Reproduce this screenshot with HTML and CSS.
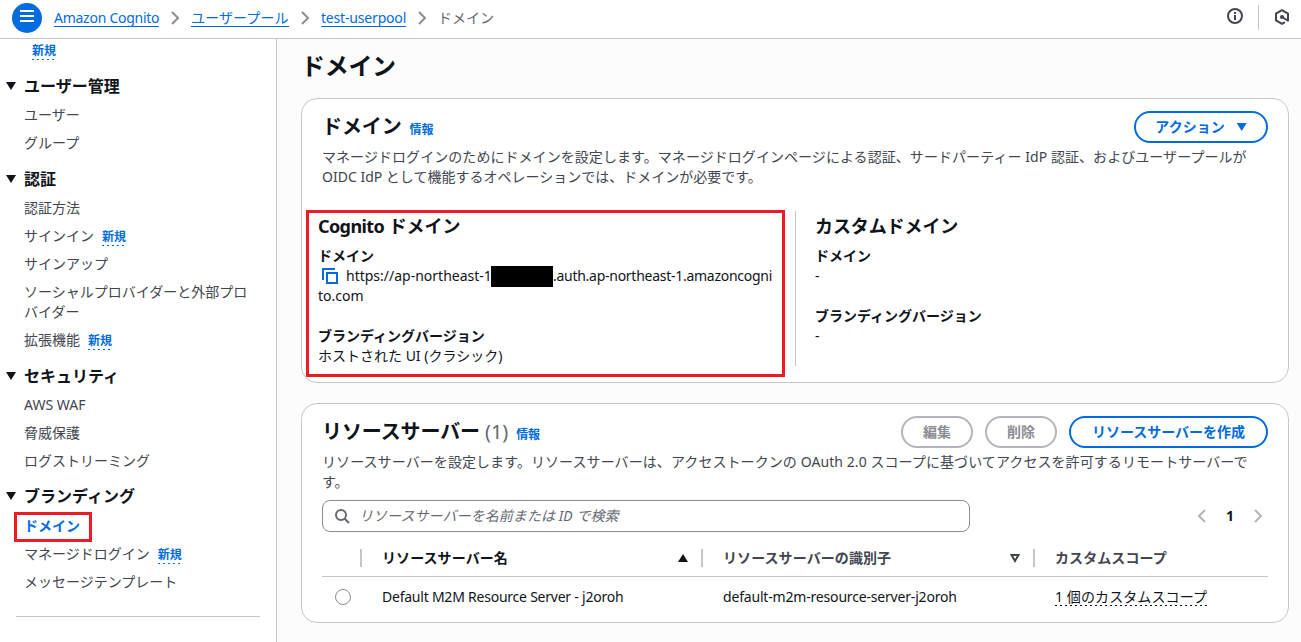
FILE: index.html
```html
<!DOCTYPE html>
<html lang="ja">
<head>
<meta charset="utf-8">
<title>ドメイン - Amazon Cognito</title>
<link rel="stylesheet" href="styles.css">
</head>
<body>
<header class="topbar">
  <button class="menu-btn" aria-label="menu"><svg width="30" height="30" viewBox="0 0 30 30"><path d="M8 8h14M8 13h14M8 18h14" stroke="#fff" stroke-width="2"/></svg></button>
  <nav class="crumbs">
    <a class="crumb c-service">Amazon Cognito</a>
    <svg class="chev" width="16" height="16" viewBox="0 0 16 16"><path d="M5 2l6 6-6 6"/></svg>
    <a class="crumb c-pools">ユーザープール</a>
    <svg class="chev" width="16" height="16" viewBox="0 0 16 16"><path d="M5 2l6 6-6 6"/></svg>
    <a class="crumb c-pool">test-userpool</a>
    <svg class="chev" width="16" height="16" viewBox="0 0 16 16"><path d="M5 2l6 6-6 6"/></svg>
    <span class="crumb-current">ドメイン</span>
  </nav>
  <div class="tools">
    <svg width="16" height="16" viewBox="0 0 16 16" fill="none" stroke="#424650" stroke-width="2"><circle cx="8" cy="8" r="7"/><path d="M8 4v2M8 7v5"/></svg>
    <span class="tools-sep"></span>
    <svg class="hex" width="16" height="16" viewBox="0 0 16 16" fill="none" stroke="#424650" stroke-width="2"><path d="M14 12.200V4.600L8 1.200 2 4.600v6.800L8 14.800l2.800-1.600M8 8l6.500 4"/><circle cx="8" cy="8" r="2.100" fill="#424650" stroke="none"/></svg>
  </div>
</header>
<div class="layout">
  <aside class="side">
    <div class="item first"><span class="new">新規</span></div>
    <h3 class="group"><i class="tri"></i>ユーザー管理</h3>
    <div class="item">ユーザー</div>
    <div class="item">グループ</div>
    <h3 class="group"><i class="tri"></i>認証</h3>
    <div class="item">認証方法</div>
    <div class="item">サインイン<span class="new">新規</span></div>
    <div class="item">サインアップ</div>
    <div class="item">ソーシャルプロバイダーと外部プロ<br>バイダー</div>
    <div class="item">拡張機能<span class="new">新規</span></div>
    <h3 class="group"><i class="tri"></i>セキュリティ</h3>
    <div class="item latin">AWS WAF</div>
    <div class="item">脅威保護</div>
    <div class="item">ログストリーミング</div>
    <h3 class="group brand"><i class="tri"></i>ブランディング</h3>
    <div class="item active">ドメイン<span class="mark mark-nav"></span></div>
    <div class="item">マネージドログイン<span class="new">新規</span></div>
    <div class="item">メッセージテンプレート</div>
    <hr class="side-line">
  </aside>
  <main class="main">
    <h1 class="page-title">ドメイン</h1>
    <section class="card card-domain">
      <div class="card-head">
        <h2 class="card-title">ドメイン<a class="info">情報</a></h2>
        <button class="btn btn-action">アクション<i class="tri blue"></i></button>
      </div>
      <p class="desc"><span class="wide-a">マネージドログインのためにドメインを設定します。マネージドログインページによる認証、サードパーティー IdP 認証、およびユーザープールが</span><br>OIDC IdP として機能するオペレーションでは、ドメインが必要です。</p>
      <div class="cols">
        <div class="col col-cognito">
          <h3 class="col-title"><span class="col-latin">Cognito</span> ドメイン</h3>
          <div class="label">ドメイン</div>
          <div class="value url"><svg class="copy" width="16" height="16" viewBox="0 0 16 16" fill="none" stroke="#006ce0" stroke-width="2"><path d="M1 12V1h12M5 5h10v10H5z"/></svg><span class="url-a">https://ap-northeast-1</span><span class="redact"></span><span class="url-b">.auth.ap-northeast-1.amazoncogni</span></div>
          <div class="value url-c">to.com</div>
          <div class="label second">ブランディングバージョン</div>
          <div class="value">ホストされた UI (クラシック)</div>
          <span class="mark mark-panel"></span>
        </div>
        <div class="col col-custom">
          <h3 class="col-title">カスタムドメイン</h3>
          <div class="label">ドメイン</div>
          <div class="value">-</div>
          <div class="label second">ブランディングバージョン</div>
          <div class="value">-</div>
        </div>
      </div>
    </section>
    <section class="card card-servers">
      <div class="card-head">
        <h2 class="card-title">リソースサーバー<span class="count">(1)</span><a class="info">情報</a></h2>
        <div class="btns">
          <button class="btn off">編集</button>
          <button class="btn off">削除</button>
          <button class="btn btn-create">リソースサーバーを作成</button>
        </div>
      </div>
      <p class="desc"><span class="wide-b">リソースサーバーを設定します。リソースサーバーは、アクセストークンの OAuth 2.0 スコープに基づいてアクセスを許可するリモートサーバーで</span><br>す。</p>
      <div class="filter">
        <div class="search"><svg width="16" height="16" viewBox="0 0 16 16" fill="none" stroke="#656871" stroke-width="2"><circle cx="7" cy="7" r="5"/><path d="M10.500 10.500L15 15"/></svg><span class="placeholder">リソースサーバーを名前または ID で検索</span></div>
        <div class="pages">
          <svg width="16" height="16" viewBox="0 0 16 16"><path d="M11 2L5 8l6 6"/></svg>
          <b>1</b>
          <svg width="16" height="16" viewBox="0 0 16 16"><path d="M5 2l6 6-6 6"/></svg>
        </div>
      </div>
      <div class="table">
        <div class="row thead">
          <div></div>
          <div class="th sorted">リソースサーバー名<svg width="16" height="16" viewBox="0 0 16 16"><path d="M8 4l5 8H3z" fill="#0f141a"/></svg></div>
          <div class="th">リソースサーバーの識別子<svg width="16" height="16" viewBox="0 0 16 16"><path d="M4.500 5h7L8 11z" fill="none" stroke="#424650" stroke-width="2"/></svg></div>
          <div class="th">カスタムスコープ</div>
        </div>
        <div class="row">
          <div class="pick"><span class="radio"></span></div>
          <div class="td"><span class="name">Default M2M Resource Server - j2oroh</span></div>
          <div class="td"><span class="ident">default-m2m-resource-server-j2oroh</span></div>
          <div class="td"><span class="scope">1 個のカスタムスコープ</span></div>
        </div>
      </div>
    </section>
  </main>
</div>
</body>
</html>
```
FILE: styles.css
```css
* { box-sizing: border-box; }
body {
  margin: 0; width: 1301px; height: 642px; overflow: hidden;
  font: 14px/20px "Noto Sans", "Noto Sans CJK JP", sans-serif;
  color: #0f141a; background: #fff; white-space: nowrap;
}
h1, h2, h3, p { margin: 0; }
svg { display: block; flex: none; }
button { font: inherit; margin: 0; padding: 0; }

.topbar { display: flex; height: 39px; border-bottom: 1px solid #c6c6cd; padding: 0 11px 0 12px; align-items: flex-start; }
.menu-btn { width: 30px; height: 30px; margin-top: 3px; border: 0; border-radius: 50%; background: #006ce0; flex: none; }
.crumbs { display: flex; align-items: center; margin: 8px 0 0 12px; height: 20px; }
.crumb { color: #006ce0; border-bottom: 1px solid #006ce0; height: 18px; line-height: 18px; }
.c-service { width: 105px; letter-spacing: -0.26px; }
.c-pools { width: 98px; letter-spacing: 0.1px; }
.c-pool { width: 85px; letter-spacing: -0.18px; }
.chev { margin: 0 8px; fill: none; stroke: #8c8c94; stroke-width: 2; }
.crumb-current { color: #656871; }
.tools { display: flex; margin-left: auto; padding-top: 5px; }
.tools > svg { margin-top: 3px; }
.tools > .hex { margin-top: 4px; }
.tools-sep { width: 1px; height: 25px; background: #c6c6cd; margin: 0 15px; }

.layout { display: flex; height: 603px; }
.side { width: 277px; border-right: 1px solid #c6c6cd; padding: 1px 16px 0 24px; flex: none; }
.item { color: #424650; margin-bottom: 8px; position: relative; }
.item.first .new { margin-left: 8px; }
.new {
  display: inline-block; font-size: 12px; line-height: 18px; font-weight: 700; color: #006ce0; margin-left: 8px;
  background: repeating-linear-gradient(90deg, #006ce0 0 2px, transparent 2px 5px) bottom / 100% 1px no-repeat;
}
.group { display: flex; align-items: center; font-size: 16px; line-height: 22px; height: 22px; margin: 15px 0 8px -18px; }
.tri { width: 10px; height: 8px; margin-right: 8px; background: #0f141a; clip-path: polygon(0 0, 100% 0, 50% 100%); }
.group.brand { margin-top: 14px; margin-bottom: 9px; }
.active { color: #006ce0; font-weight: 700; }
.mark { position: absolute; border: 3px solid #ed1c24; }
.mark-nav { left: -10px; top: -4px; width: 78px; height: 30px; }
.side-line { border: 0; height: 1px; background: #c6c6cd; margin: 24px 0 0 -8px; width: 244px; }

.main { flex: 1; background: #fcfcfd; padding: 12px 12px 0 24px; }
.page-title { font-size: 24px; line-height: 30px; height: 47px; letter-spacing: -0.3px; }
.card { background: #fff; border: 1px solid #c6c6cd; border-radius: 16px; padding: 12px 20px 0; width: 988px; }
.card-domain { height: 285px; }
.card-servers { height: 220px; margin-top: 20px; }
.card-head { display: flex; justify-content: space-between; height: 36px; }
.card-title { font-size: 20px; line-height: 32px; letter-spacing: -0.1px; }
.info { font-size: 12px; color: #006ce0; margin-left: 8px; }
.count { color: #656871; font-weight: 400; margin-left: 5px; }
.desc { color: #424650; }
.wide-a { letter-spacing: 0.06px; }
.wide-b { letter-spacing: 0.08px; }
.btns { display: flex; gap: 12px; }
.btn { height: 32px; border: 2px solid #006ce0; border-radius: 20px; background: #fff; color: #006ce0; font-weight: 700; display: flex; align-items: center; justify-content: center; }
.btn-action { width: 134px; gap: 12px; }
.tri.blue { background: #006ce0; margin: 0; }
.btn.off { width: 72px; color: #8c8c94; border-color: #b4b4bb; }
.btn-create { width: 199px; }

.cols { display: flex; margin-top: 24px; height: 155px; }
.col { position: relative; }
.col-cognito { width: 477px; margin-left: -4px; }
.col-custom { border-left: 1px solid #c6c6cd; padding-left: 19px; }
.col-title { font-size: 18px; line-height: 22px; margin: 4px 0 9px; letter-spacing: -0.1px; }
.col-latin { letter-spacing: -0.6px; }
.label { font-weight: 700; }
.url { display: flex; align-items: center; height: 20px; }
.copy { margin: 0 8px 0 4px; }
.url-a { width: 145px; }
.url-b { letter-spacing: -0.27px; }
.redact { width: 62px; height: 21px; background: #000; }
.second { margin-top: 20px; }
.mark-panel { left: -12px; top: -1px; width: 479px; height: 167px; }

.filter { display: flex; justify-content: space-between; margin-top: 8px; }
.search { width: 648px; height: 32px; border: 1px solid #8c8c94; border-radius: 8px; display: flex; align-items: center; padding-left: 11px; gap: 9px; }
.placeholder { color: #656871; font-style: italic; letter-spacing: 0.06px; }
.pages { display: flex; align-items: center; gap: 12px; padding-right: 2px; }
.pages b { width: 16px; text-align: center; }
.pages svg { fill: none; stroke: #b4b4bb; stroke-width: 2; }

.row { display: grid; grid-template-columns: 38px 341px 332px 1fr; align-items: center; height: 40px; }
.thead { height: 45px; border-bottom: 1px solid #c6c6cd; padding-top: 7px; }
.th { display: flex; justify-content: space-between; align-items: center; border-left: 2px solid #c6c6cd; height: 18px; padding: 0 10px 0 20px; font-weight: 700; color: #424650; letter-spacing: 0.08px; }
.sorted { color: #0f141a; }
.pick { padding-left: 13px; }
.radio { display: block; width: 16px; height: 16px; border: 1px solid #8c8c94; border-radius: 50%; }
.td { padding-left: 22px; }
.name { letter-spacing: -0.23px; }
.ident { letter-spacing: -0.18px; }
.scope {
  display: inline-block; line-height: 19px; letter-spacing: 0.1px;
  background: repeating-linear-gradient(90deg, #0f141a 0 2px, transparent 2px 5px) bottom / 100% 1px no-repeat;
}
```
